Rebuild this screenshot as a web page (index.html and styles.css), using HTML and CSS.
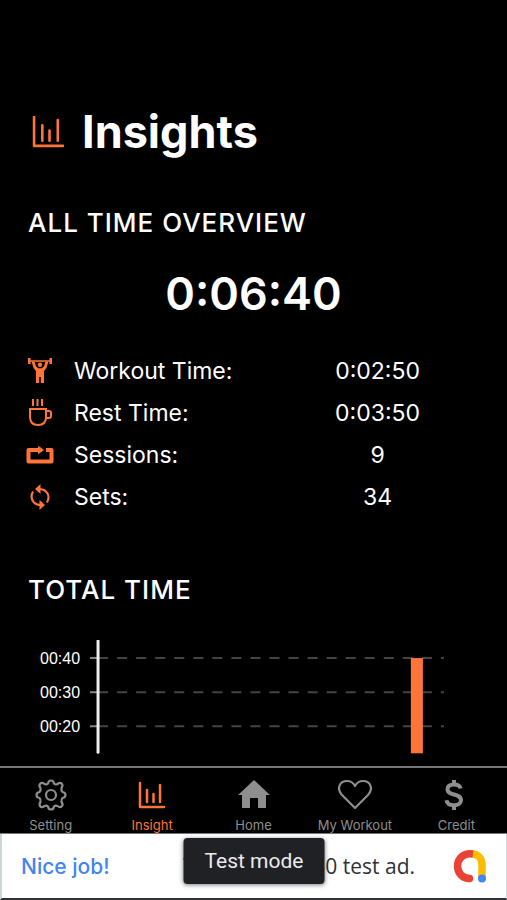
FILE: index.html
```html
<!DOCTYPE html>
<html lang="en">
<head>
  <meta charset="UTF-8">
  <meta name="viewport" content="width=device-width, initial-scale=1.0">
  <title>Insights</title>
  <link rel="stylesheet" href="styles.css">
</head>
<body>
  <main>
    <header>
      <svg class="title-icon" viewBox="0 0 32 32" fill="none" stroke="currentColor" stroke-width="2.500" stroke-linecap="round" stroke-linejoin="round">
        <path d="M2 1v28h28M10 9v15M17 14v10M25 4v20"/>
      </svg>
      <h1>Insights</h1>
    </header>

    <section>
      <h2>ALL TIME OVERVIEW</h2>
      <p class="total">0:06:40</p>
      <table class="stats">
        <tr>
          <td class="icon">
            <svg viewBox="0 0 24 26" fill="currentColor">
              <path d="M0 0h2.500v6H0zM21.500 0H24v6h-2.500zM2 2.200h20v1.600H2z"/>
              <circle cx="12" cy="6.800" r="2.200"/>
              <path d="M3.600 3.500h3l1.300 4.800 2.400 2h3.400l2.400-2 1.300-4.800h3L18.600 9.700 16 13.100V25h-3.200v-6h-1.600v6H8V13.100L5.400 9.700z"/>
            </svg>
          </td>
          <th scope="row">Workout Time:</th>
          <td class="value">0:02:50</td>
        </tr>
        <tr>
          <td class="icon">
            <svg class="cup" viewBox="0 0 24 28" fill="none" stroke="currentColor" stroke-width="2">
              <path d="M5 0v7M9.500 0v7M14 0v7M2 10h16v8c0 5-3 8-8 8s-8-3-8-8zM18 12h3q2 0 2 2v3q0 2-2 2h-3"/>
            </svg>
          </td>
          <th scope="row">Rest Time:</th>
          <td class="value">0:03:50</td>
        </tr>
        <tr>
          <td class="icon">
            <svg class="repeat" viewBox="0 0 28 18" fill="none" stroke="currentColor" stroke-width="4" stroke-linejoin="round">
              <path d="M13 4H2.500v11.500h23V4H20"/>
              <path d="M12.500 0.500v7L17.500 4z" fill="currentColor" stroke-width="1"/>
            </svg>
          </td>
          <th scope="row">Sessions:</th>
          <td class="value">9</td>
        </tr>
        <tr>
          <td class="icon">
            <svg viewBox="0 0 24 26" fill="none" stroke="currentColor" stroke-width="2.200">
              <path d="M11 5c6 0 9.500 4 9.500 8.500 0 2-.6 3.500-1.600 5M13 21c-6 0-9.500-4-9.500-8.500 0-2 .6-3.500 1.600-5"/>
              <path d="M12.500 0v10l-5.500-5zM11.500 16v10l5.500-5z" fill="currentColor" stroke="none"/>
            </svg>
          </td>
          <th scope="row">Sets:</th>
          <td class="value">34</td>
        </tr>
      </table>
    </section>

    <section>
      <h2>TOTAL TIME</h2>
      <div class="chart">
        <div class="labels">
          <span>00:40</span>
          <span>00:30</span>
          <span>00:20</span>
        </div>
        <svg class="plot" viewBox="0 0 354 114">
          <path class="grid" d="M9 18h345M9 52h345M9 86h345"/>
          <path class="tick" d="M1 18h8M1 52h8M1 86h8"/>
          <path class="axis" d="M9 1v111"/>
          <rect class="bar" x="321" y="18" width="12" height="95"/>
        </svg>
      </div>
    </section>
  </main>

  <nav>
    <a href="#setting">
      <svg viewBox="0 0 32 32" fill="none" stroke="currentColor" stroke-width="2.200" stroke-linejoin="round">
        <path d="M13 4.500Q13.500 1.500 16 1.500t3 3q1.500 1.500 3.500.500 2.800-2 4.300-.300t-.300 4.300q-.5 2.500 1 4 3 .500 3 3t-3 3q-1.500 1.500-1 4 2 2.500.3 4.300t-4.300-.300q-2-1-3.500.500-.5 3-3 3t-3-3q-1.500-1.500-3.500-.5-2.800 2-4.300.3t.3-4.300q.5-2.500-1-4-3-.5-3-3t3-3q1.500-1.500 1-4-2-2.500-.3-4.300t4.300.3q2 1 3.500-.5z"/>
        <circle cx="16" cy="16" r="5"/>
      </svg>
      <span>Setting</span>
    </a>
    <a href="#insight" class="active">
      <svg viewBox="0 0 32 32" fill="none" stroke="currentColor" stroke-width="2.500" stroke-linecap="round" stroke-linejoin="round">
        <path d="M4 4v24h24M11 11v12M17.500 15v8M24 6v17"/>
      </svg>
      <span>Insight</span>
    </a>
    <a href="#home">
      <svg viewBox="0 0 32 32" fill="currentColor">
        <path d="M16 1 32 16h-4v13h-8V19h-8v10H4V16h-4z"/>
      </svg>
      <span>Home</span>
    </a>
    <a href="#workout">
      <svg viewBox="0 0 32 32" fill="none" stroke="currentColor" stroke-width="2.200" stroke-linejoin="round">
        <path d="M16 29 3 16C-3 9 1 2 8 2c4 0 6.500 2 8 5 1.500-3 4-5 8-5 7 0 11 7 5 14z"/>
      </svg>
      <span>My Workout</span>
    </a>
    <a href="#credit">
      <svg viewBox="0 0 32 32" fill="none" stroke="currentColor" stroke-width="4">
        <path d="M20.500 9.500C20 6.500 17 5.500 14 5.500c-4 0-6.500 1.700-6.500 4.700 0 7.300 13.500 3.300 13.500 11 0 3.300-3 5-7 5s-7-1.500-7.500-5M14 1v4M14 26v5"/>
      </svg>
      <span>Credit</span>
    </a>
  </nav>

  <aside class="ad">
    <strong>Nice job!</strong>
    <span class="ad-text">This is a 320x50 test ad.</span>
    <svg viewBox="0 0 34 34" fill="none" stroke-width="7.500">
      <path d="M19 5c6 0 10 4.500 10 11v12" stroke="#fbbc04"/>
      <path d="M20 5C10 3.500 4.500 10 4.500 17s5 12.500 12 12.500" stroke="#ea4335"/>
      <circle cx="16.500" cy="29.500" r="3.750" fill="#ea4335"/>
      <circle cx="29" cy="29.500" r="4" fill="#4285f4"/>
    </svg>
    <div class="toast">Test mode</div>
  </aside>
</body>
</html>
```
FILE: styles.css
```css
* {
  margin: 0;
  padding: 0;
  box-sizing: border-box;
}

body {
  font-family: 'Inter', sans-serif;
  background-color: #000;
  color: #fff;
  display: flex;
  flex-direction: column;
  min-height: 100vh;
}

main {
  flex: 1;
  padding: 104px 28px 12px;
}

header {
  display: flex;
  align-items: center;
  gap: 17px;
  padding-left: 4px;
  margin-bottom: 48px;
}

.title-icon {
  width: 33px;
  height: 33px;
  color: #ff7438;
}

h1 {
  font-size: 45px;
  line-height: 56px;
}

h2 {
  font-size: 26px;
  font-weight: 500;
  line-height: 30px;
  letter-spacing: 1px;
}

.total {
  font-size: 45px;
  font-weight: 600;
  line-height: 56px;
  text-align: center;
  margin: 28px 0;
}

.stats {
  width: 100%;
  table-layout: fixed;
  border-collapse: collapse;
  font-size: 23px;
  line-height: 42px;
  margin-bottom: 57px;
}

.stats th {
  font-weight: 400;
  text-align: left;
}

.stats .icon {
  width: 46px;
  color: #ff7438;
}

.stats .value {
  width: 45%;
  text-align: center;
}

.stats svg {
  display: block;
  width: 24px;
  height: 26px;
}

.stats .cup {
  height: 28px;
}

.stats .repeat {
  width: 28px;
  height: 18px;
  margin-left: -2px;
}

.chart {
  display: flex;
  align-items: flex-start;
  gap: 9px;
  padding: 0 35px 0 12px;
  margin-top: 35px;
}

.labels {
  display: flex;
  flex-direction: column;
  padding-top: 2px;
  font-family: 'Liberation Sans', Arial, sans-serif;
  font-size: 16px;
  line-height: 34px;
}

.plot {
  flex: 1;
  min-width: 0;
}

.plot path {
  fill: none;
}

.grid {
  stroke: #444;
  stroke-width: 2;
  stroke-dasharray: 10 9;
}

.tick {
  stroke: #888;
  stroke-width: 2;
}

.axis {
  stroke: #eee;
  stroke-width: 3;
  stroke-linecap: round;
}

.bar {
  fill: #ff7438;
}

nav {
  display: flex;
  height: 68px;
  border-top: 2px solid #777;
  border-bottom: 1px solid #777;
}

nav a {
  flex: 1;
  display: flex;
  flex-direction: column;
  align-items: center;
  gap: 6px;
  padding-top: 11px;
  color: #8e8e8e;
  font-size: 13px;
  line-height: 16px;
  text-decoration: none;
  white-space: nowrap;
}

nav svg {
  width: 32px;
  height: 32px;
  overflow: visible;
}

nav .active {
  color: #ff7438;
}

.ad {
  position: relative;
  display: flex;
  align-items: center;
  height: 66px;
  padding: 0 19px;
  background-color: #fff;
  color: #303134;
  border-left: 2px solid #cdd8db;
  border-right: 1px solid #cdd8db;
  border-bottom: 2px solid #303134;
  font-size: 21px;
}

.ad strong {
  color: #4285f4;
  font-weight: 500;
}

.ad-text {
  margin-left: auto;
  font-family: 'Open Sans', sans-serif;
}

.ad svg {
  width: 34px;
  height: 34px;
  margin-left: 38px;
}

.toast {
  position: absolute;
  top: 4px;
  left: 50%;
  transform: translateX(-50%);
  padding: 0 21px;
  border-radius: 4px;
  background-color: #202124;
  color: #e8eaed;
  font-family: 'Roboto', sans-serif;
  line-height: 46px;
  white-space: nowrap;
  box-shadow: 0 1px 4px rgba(0, 0, 0, 0.5);
}
```
